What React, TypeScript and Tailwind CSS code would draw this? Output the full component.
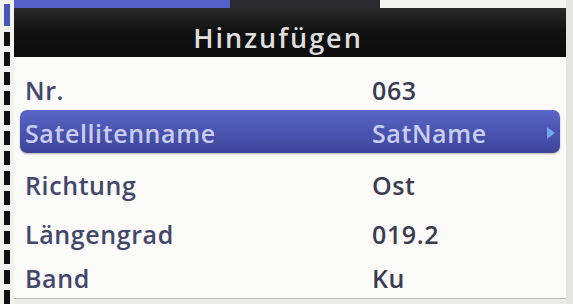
const rows = [
  { label: 'Nr.', value: '063' },
  { label: 'Satellitenname', value: 'SatName', active: true },
  { label: 'Richtung', value: 'Ost' },
  { label: 'Längengrad', value: '019.2' },
  { label: 'Band', value: 'Ku' },
]

function LeftDashes() {
  return (
    <div className="flex w-[14px] shrink-0 flex-col items-center bg-[#f2f2ef] pt-[4px]">
      <div className="h-[22px] w-[6px] bg-[#4656b8]" />
      {Array.from({ length: 14 }).map((_, i) => (
        <div key={i} className="mt-[6px] h-[14px] w-[6px] bg-[#111]" />
      ))}
    </div>
  )
}

export default function App() {
  return (
    <div className="flex h-[304px] w-[573px] overflow-hidden bg-[#e6e6e1] font-['Open_Sans',sans-serif]">
      <LeftDashes />
      <div className="flex w-[552px] flex-col">
        <div className="flex h-[8px]">
          <div className="w-[216px] bg-[#5560c8]" />
          <div className="w-[150px] bg-[#2a2a2e]" />
          <div className="flex-1 bg-[#f4f4f2]" />
        </div>
        <div className="flex h-[49px] items-center justify-center bg-gradient-to-b from-[#2a2a2a] via-[#111] to-[#0c0c0c] pt-[10px] pr-[24px] text-[27px] font-semibold leading-none tracking-[2px] text-[#dedede]">
          Hinzufügen
        </div>
        <div className="flex h-[241px] flex-col bg-[#fbfbf9] pt-[13px]">
          {rows.map((r, i) => {
            const h = ['h-[40px]', 'h-[43px]', 'h-[50px]', 'h-[48px]', 'h-[40px]'][i]
            return r.active ? (
              <div
                key={r.label}
                className={`${h} mx-[6px] flex items-center rounded-[7px] bg-gradient-to-b from-[#5b66c6] via-[#4a54b0] to-[#3d4699] pl-[5px] pt-[3px] text-[25px] font-semibold leading-none tracking-[0.6px] text-[#c9cdf2] shadow-[0_1px_2px_rgba(0,0,0,0.3)]`}
              >
                <span className="w-[347px]">{r.label}</span>
                <span className="flex-1">{r.value}</span>
                <svg width="10" height="14" viewBox="0 0 10 14" className="mr-[4px]">
                  <path d="M1 1 L9 7 L1 13 Z" fill="#6fa8ec" />
                </svg>
              </div>
            ) : (
              <div
                key={r.label}
                className={`${h} ${i === 2 ? 'mt-[7px]' : ''} flex items-center pl-[11px] text-[25px] font-semibold leading-none tracking-[0.6px]`}
              >
                <span className="w-[347px] text-[#44476c]">{r.label}</span>
                <span className="text-[#3b3c52]">{r.value}</span>
              </div>
            )
          })}
        </div>
        <div className="h-[6px] border-t border-[#b8b8b4] bg-[#ecece8]" />
      </div>
    </div>
  )
}
